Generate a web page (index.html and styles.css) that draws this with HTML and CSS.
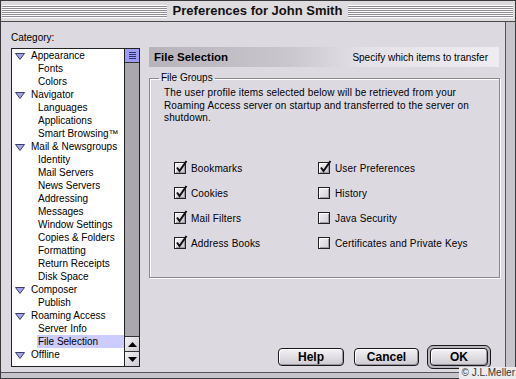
FILE: index.html
```html
<!DOCTYPE html>
<html lang="en">
<head>
    <meta charset="UTF-8">
    <meta name="viewport" content="width=device-width, initial-scale=1.0">
    <title>Preferences for John Smith</title>
    <link rel="stylesheet" href="styles.css">
</head>
<body>

<div class="window">
    <!-- Title bar -->
    <div class="titlebar">
        <span class="stripes"></span>
        <h1 class="title">Preferences for John Smith</h1>
        <span class="stripes"></span>
    </div>

    <div class="frame">
        <div class="content">
            <!-- Category tree -->
            <div class="sidebar">
                <div class="cat-label">Category:</div>
                <div class="list">
                    <ul class="tree">
                        <li class="parent"><svg class="twisty" viewBox="0 0 10 7"><polygon points="0.5,0.5 9.5,0.5 5,6.5"/></svg><span>Appearance</span></li>
                        <li class="child"><span>Fonts</span></li>
                        <li class="child"><span>Colors</span></li>
                        <li class="parent"><svg class="twisty" viewBox="0 0 10 7"><polygon points="0.5,0.5 9.5,0.5 5,6.5"/></svg><span>Navigator</span></li>
                        <li class="child"><span>Languages</span></li>
                        <li class="child"><span>Applications</span></li>
                        <li class="child"><span>Smart Browsing™</span></li>
                        <li class="parent"><svg class="twisty" viewBox="0 0 10 7"><polygon points="0.5,0.5 9.5,0.5 5,6.5"/></svg><span>Mail &amp; Newsgroups</span></li>
                        <li class="child"><span>Identity</span></li>
                        <li class="child"><span>Mail Servers</span></li>
                        <li class="child"><span>News Servers</span></li>
                        <li class="child"><span>Addressing</span></li>
                        <li class="child"><span>Messages</span></li>
                        <li class="child"><span>Window Settings</span></li>
                        <li class="child"><span>Copies &amp; Folders</span></li>
                        <li class="child"><span>Formatting</span></li>
                        <li class="child"><span>Return Receipts</span></li>
                        <li class="child"><span>Disk Space</span></li>
                        <li class="parent"><svg class="twisty" viewBox="0 0 10 7"><polygon points="0.5,0.5 9.5,0.5 5,6.5"/></svg><span>Composer</span></li>
                        <li class="child"><span>Publish</span></li>
                        <li class="parent"><svg class="twisty" viewBox="0 0 10 7"><polygon points="0.5,0.5 9.5,0.5 5,6.5"/></svg><span>Roaming Access</span></li>
                        <li class="child"><span>Server Info</span></li>
                        <li class="child selected"><span>File Selection</span></li>
                        <li class="parent"><svg class="twisty" viewBox="0 0 10 7"><polygon points="0.5,0.5 9.5,0.5 5,6.5"/></svg><span>Offline</span></li>
                    </ul>
                    <div class="scrollbar">
                        <div class="thumb"><i></i><i></i><i></i><i></i></div>
                        <div class="track"></div>
                        <div class="arrow"><svg viewBox="0 0 9 5" width="9" height="5"><polygon points="0,5 9,5 4.5,0"/></svg></div>
                        <div class="arrow"><svg viewBox="0 0 9 5" width="9" height="5"><polygon points="0,0 9,0 4.5,5"/></svg></div>
                    </div>
                </div>
            </div>

            <!-- File Selection panel -->
            <div class="panel">
                <div class="panel-head">
                    <b>File Selection</b>
                    <span>Specify which items to transfer</span>
                </div>

                <fieldset class="group">
                    <legend>File Groups</legend>
                    <p>The user profile items selected below will be retrieved from your Roaming Access server on startup and transferred to the server on shutdown.</p>
                    <div class="checks">
                        <label class="check"><span class="box"><svg viewBox="0 0 14 14"><path d="M3 6.5 L5.5 10 L12.5 0"/></svg></span>Bookmarks</label>
                        <label class="check"><span class="box"><svg viewBox="0 0 14 14"><path d="M3 6.5 L5.5 10 L12.5 0"/></svg></span>User Preferences</label>
                        <label class="check"><span class="box"><svg viewBox="0 0 14 14"><path d="M3 6.5 L5.5 10 L12.5 0"/></svg></span>Cookies</label>
                        <label class="check"><span class="box empty"></span>History</label>
                        <label class="check"><span class="box"><svg viewBox="0 0 14 14"><path d="M3 6.5 L5.5 10 L12.5 0"/></svg></span>Mail Filters</label>
                        <label class="check"><span class="box empty"></span>Java Security</label>
                        <label class="check"><span class="box"><svg viewBox="0 0 14 14"><path d="M3 6.5 L5.5 10 L12.5 0"/></svg></span>Address Books</label>
                        <label class="check"><span class="box empty"></span>Certificates and Private Keys</label>
                    </div>
                </fieldset>

                <div class="buttons">
                    <button class="btn help">Help</button>
                    <button class="btn cancel">Cancel</button>
                    <span class="default-ring"><button class="btn ok">OK</button></span>
                </div>
            </div>
        </div>
    </div>

    <div class="credit">© J.L.Meller</div>
</div>

</body>
</html>
```

FILE: styles.css
```css
body {
    margin: 0;
    font-family: "Liberation Sans", Arial, sans-serif;
    font-size: 10px;
    color: #000;
    background-color: #dcd9e0;
}
.window {
    position: relative;
    width: 516px;
    height: 379px;
    box-sizing: border-box;
    border: 1px solid #3a3a3a;
    display: flex;
    flex-direction: column;
    background-color: #c7c4cb;
}
/* Title bar */
.titlebar {
    height: 20px;
    display: flex;
    align-items: center;
    gap: 4px;
    padding: 0 2px 0 1px;
    background-color: #dedcdf;
    border-bottom: 1px solid #4a4a4a;
}
.stripes {
    flex: 1;
    height: 13px;
    background: repeating-linear-gradient(#fff 0 1px, #8e8c92 1px 2px);
}
.title {
    margin: 0;
    padding: 0 2px;
    font-size: 13px;
    font-weight: bold;
    line-height: 20px;
    color: #111;
}
.frame {
    flex: 1;
    display: flex;
    padding: 0 9px 5px 0;
}
.content {
    flex: 1;
    display: flex;
    gap: 9px;
    padding: 9px 0 3px 10px;
    background-color: #dcd9e0;
    border-right: 1px solid #555;
    border-bottom: 1px solid #555;
}
/* Category list */
.sidebar {
    width: 129px;
    display: flex;
    flex-direction: column;
    padding-bottom: 2px;
}
.cat-label {
    line-height: 13px;
    margin-bottom: 4px;
}
.list {
    flex: 1;
    display: flex;
    border: 1px solid #222;
    background-color: #fff;
    overflow: hidden;
}
.tree {
    flex: 1;
    list-style: none;
    margin: 0;
    padding: 0;
}
.tree li {
    height: 13px;
    display: flex;
    align-items: center;
    white-space: nowrap;
}
.tree .parent {
    padding-left: 3px;
}
.tree .child {
    padding-left: 25px;
}
.tree .child span {
    flex: 1;
    padding-left: 1px;
    line-height: 13px;
}
.tree .selected span {
    background-color: #ccccff;
}
.twisty {
    width: 10px;
    height: 7px;
    margin-right: 6px;
    margin-top: 2px;
}
.twisty polygon {
    fill: #a3a3ea;
    stroke: #3c3c6a;
    stroke-width: 1;
}
.scrollbar {
    width: 14px;
    border-left: 1px solid #222;
    display: flex;
    flex-direction: column;
    background-color: #aba7af;
}
.thumb {
    height: 14px;
    box-sizing: border-box;
    border-bottom: 1px solid #333;
    background-color: #9c9cf2;
    display: flex;
    flex-direction: column;
    align-items: center;
    justify-content: center;
    gap: 1px;
}
.thumb i {
    width: 7px;
    height: 1px;
    background-color: #33336e;
}
.track {
    flex: 1;
}
.arrow {
    height: 15px;
    box-sizing: border-box;
    border-top: 1px solid #333;
    background: linear-gradient(135deg, #f4f2f6, #cbc8cf);
    display: flex;
    align-items: center;
    justify-content: center;
}
.arrow polygon {
    fill: #000;
}
/* Right panel */
.panel {
    width: 351px;
    display: flex;
    flex-direction: column;
    padding-top: 16px;
}
.panel-head {
    width: 350px;
    height: 20px;
    box-sizing: border-box;
    display: flex;
    align-items: center;
    justify-content: space-between;
    padding: 0 11px 0 5px;
    background: linear-gradient(to right, #b6b3bb, #c9c6cd 40%, #e4e2e7 62%, #eeecf0);
}
.panel-head b {
    font-size: 11.5px;
}
.group {
    margin: 5px 0 0;
    padding: 0 0 27px;
    min-width: 0;
    border: 1px solid #8c8a90;
    box-shadow: inset 1px 1px 0 #fff, 1px 1px 0 #fff;
}
.group legend {
    margin-left: 9px;
    padding: 0 2px;
    line-height: 12px;
}
.group p {
    margin: 3px 14px 0;
    line-height: 12.5px;
    letter-spacing: 0.15px;
}
.checks {
    display: grid;
    grid-template-columns: 144px auto;
    grid-auto-rows: 13px;
    row-gap: 12px;
    margin: 37px 0 0 24px;
}
.check {
    display: flex;
    align-items: center;
    gap: 5px;
    letter-spacing: 0.15px;
}
.box {
    position: relative;
    width: 12px;
    height: 12px;
    box-sizing: border-box;
    border: 1px solid #222;
    background: linear-gradient(135deg, #fbfafc, #c4c1c8);
    box-shadow: inset 1px 1px 0 #fff, inset -1px -1px 0 #a19da6;
}
.box.empty {
    background: linear-gradient(135deg, #f3f1f5, #d2cfd6);
}
.box svg {
    position: absolute;
    left: -1px;
    top: -2px;
    width: 14px;
    height: 14px;
    overflow: visible;
}
.box path {
    fill: none;
    stroke: #111;
    stroke-width: 2;
    stroke-linejoin: miter;
}
/* Buttons */
.buttons {
    margin-top: auto;
    display: flex;
    align-items: center;
    justify-content: flex-end;
    padding-right: 9px;
}
.btn {
    height: 18px;
    box-sizing: border-box;
    padding: 0;
    border: 1px solid #1a1a1a;
    border-radius: 4px;
    background: linear-gradient(#f4f2f6, #cdcad1);
    box-shadow: inset 1px 1px 0 #fff, inset -1px -1px 0 #9a96a0;
    font-family: "Liberation Sans", Arial, sans-serif;
    font-size: 12px;
    font-weight: bold;
    color: #000;
}
.help {
    width: 66px;
    margin-right: 10px;
}
.cancel {
    width: 65px;
    margin-right: 8px;
}
.default-ring {
    display: flex;
    padding: 2px;
    border: 1px solid #1a1a1a;
    border-radius: 6px;
    background-color: #b9b6bd;
}
.ok {
    width: 58px;
}
.credit {
    position: absolute;
    right: -1px;
    bottom: -1px;
    padding: 0 1px 0 3px;
    font-size: 10px;
    line-height: 12px;
    color: #333;
    background-color: #ecebee;
}
```
